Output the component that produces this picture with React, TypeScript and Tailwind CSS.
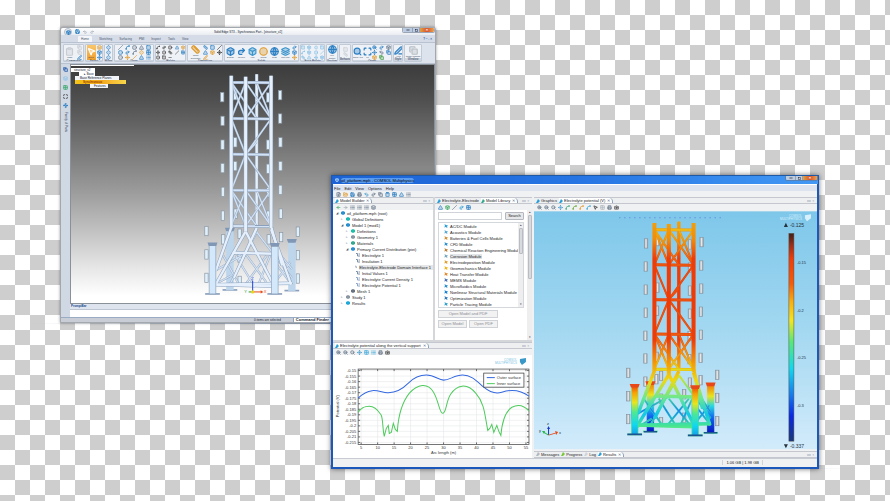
import type { ReactNode } from 'react';
import {
  ArrowLeft,
  ArrowRight,
  Box,
  Camera,
  Circle,
  Clipboard,
  Copy,
  Diamond,
  FilePlus,
  FolderOpen,
  Globe,
  Grid2x2,
  Layers,
  List,
  Maximize,
  Minus,
  MousePointer2,
  Move,
  PenLine,
  Printer,
  Redo2,
  Ruler,
  Save,
  Search,
  Slash,
  Spline,
  Square,
  Triangle,
  Undo2,
  Waypoints,
  ZoomIn,
  ZoomOut,
  type LucideIcon,
} from 'lucide-react';

type Geometry = {
  legs: number[];
  rings: number[];
  top: number;
  posts: { x: number; top: number; bottom: number; back?: boolean }[];
  anodes: [number, number][];
};

const cadTower: Geometry = {
  legs: [124, 167, 200, 243],
  rings: [52, 160, 267, 374, 481],
  top: 32,
  posts: [
    { x: 120, top: 490, bottom: 672, back: true },
    { x: 305, top: 524, bottom: 674, back: true },
    { x: 68, top: 534, bottom: 684 },
    { x: 254, top: 536, bottom: 684 },
  ],
  anodes: [
    [97, 96], [98, 167], [98, 238], [98, 308], [99, 379], [99, 450],
    [270, 90], [270, 160], [271, 231], [271, 302], [271, 373], [272, 444],
    [136, 90], [136, 231], [136, 302], [137, 444], [234, 97], [234, 238], [234, 310], [235, 380], [235, 450],
    [50, 496], [50, 566], [50, 636], [323, 498], [323, 568], [323, 638],
    [100, 521], [273, 514], [149, 504], [149, 575], [149, 645], [236, 521],
  ],
};

const resultTower: Geometry = {
  legs: [162, 205, 235, 279],
  rings: [73, 178, 282, 385, 490],
  top: 53,
  posts: [
    { x: 150, top: 530, bottom: 676, back: true },
    { x: 330, top: 534, bottom: 680, back: true },
    { x: 103, top: 538, bottom: 685 },
    { x: 284, top: 542, bottom: 688 },
  ],
  anodes: [
    [137, 114], [136, 183], [136, 252], [136, 321], [135, 390], [135, 458],
    [303, 110], [302, 180], [302, 249], [301, 318], [301, 387], [300, 456],
    [171, 107], [171, 246], [170, 315], [169, 453], [268, 117], [268, 186], [268, 255], [268, 324], [267, 391], [267, 460],
    [84, 501], [84, 571], [84, 639], [350, 507], [350, 576], [350, 645],
    [135, 527], [300, 523], [168, 520], [182, 510], [182, 578], [182, 648], [251, 565], [251, 635], [268, 530],
  ],
};

function Tower({ g, tube, thin, edge, post, backPost, cap, anode }: {
  g: Geometry;
  tube: string;
  thin: string;
  edge: string;
  post: string;
  backPost: string;
  cap: string;
  anode: string;
}) {
  const [l, m, b, r] = g.legs;
  const [backL, backR, frontL, frontR] = g.posts;
  const foot = frontL.bottom - 28;
  const ring = g.rings[4];
  const mid = ring + 88;

  const braces: number[][] = [];
  [0, 3].forEach((i) => {
    const y1 = g.rings[i];
    const y2 = g.rings[i + 1];
    braces.push([l, y1, m, y2], [m, y1, l, y2], [m, y1, r, y2], [r, y1, m, y2], [l, y1, b, y2], [b, y1, r, y2]);
  });
  braces.push([l, g.rings[1], m, g.rings[2]], [r, g.rings[1], m, g.rings[2]]);
  braces.push([m, g.rings[2], l, g.rings[3]], [m, g.rings[2], r, g.rings[3]], [b, g.rings[1] + 70, m, g.rings[2]]);
  braces.push([backL.x, foot, b, mid - 70], [b, mid - 70, backR.x, foot - 20]);
  braces.push([b - 30, mid, b + 34, foot], [b + 30, mid, b - 34, foot], [m - 30, mid, b - 10, foot], [b + 40, mid, b + 5, foot]);
  braces.push([frontL.x, mid + 50, m, mid - 6], [backL.x - 20, mid, m - 20, foot], [r + 8, mid - 25, backR.x, mid + 40]);
  braces.push([frontR.x, mid + 20, backR.x, foot], [frontR.x, foot - 6, backR.x - 4, mid + 20], [backL.x + 4, mid + 60, frontL.x, mid + 90]);

  const tubes: number[][] = [
    [l, ring + 5, frontL.x + 10, mid + 45],
    [m, ring + 16, frontL.x + 8, foot + 2],
    [m, ring + 16, frontR.x - 4, foot],
    [r, ring + 10, backR.x - 2, foot],
    [b, ring + 6, backL.x + 12, foot - 20],
    [r, ring, frontR.x + 22, mid + 30],
    [l + 4, mid - 8, frontR.x, mid - 5],
    [frontL.x, foot, frontR.x, foot + 5],
    [frontL.x, foot, backR.x, foot - 4],
  ];

  const line = (p: number[], i: number, color: string, w: number) => (
    <line key={i} x1={p[0]} y1={p[1]} x2={p[2]} y2={p[3]} stroke={color} strokeWidth={w} />
  );
  const drawPost = (p: Geometry['posts'][number], i: number) => (
    <g key={i}>
      <path d={`M${p.x - 22} ${p.bottom}h44`} stroke={edge} strokeWidth="5" />
      <rect x={p.x - 10} y={p.top} width="20" height={p.bottom - p.top} fill={p.back ? backPost : post} stroke={p.back ? backPost : edge} strokeWidth="2" />
      <path d={`M${p.x - 15} ${p.top - 4}h30l-4 11h-22z`} fill={cap} />
    </g>
  );

  return (
    <g>
      {g.anodes.map(([x, y]) => (
        <rect key={`${x}-${y}`} x={x - 5} y={y - 14} width="10" height="28" fill={anode} stroke="#8794a0" strokeWidth="2" />
      ))}
      {[backL, backR].map(drawPost)}
      {line([b, g.top - 4, b, ring], 0, edge, 10)}
      {line([b, g.top - 4, b, ring], 1, tube, 7)}
      {braces.map((p, i) => line(p, i, edge, 6))}
      {braces.map((p, i) => line(p, i, thin, 4))}
      {tubes.map((p, i) => line(p, i, edge, 10))}
      {tubes.map((p, i) => line(p, i, tube, 7))}
      {g.rings.map((y, i) => line([l, y, r, y + 1], i, edge, 9))}
      {g.rings.map((y, i) => line([l, y, r, y + 1], i, thin, 6))}
      {[l, m, r].map((x, i) => line([x, x === m ? g.top + 3 : g.top, x, x === m ? ring + 16 : ring + 6], i, edge, 12))}
      {[l, m, r].map((x, i) => line([x, x === m ? g.top + 3 : g.top, x, x === m ? ring + 16 : ring + 6], i, tube, 9))}
      {[frontL, frontR].map(drawPost)}
    </g>
  );
}

function Tool({ icon: Icon, color, label }: { icon: LucideIcon; color: string; label: string }) {
  return (
    <button aria-label={label} className="flex items-center justify-center">
      <Icon className="size-[5px]" color={color} fill={color} fillOpacity={0.25} strokeWidth={3} />
    </button>
  );
}

function WindowControls() {
  return (
    <div className="flex h-[5px] overflow-hidden rounded-b-[2px] border border-t-0 border-slate-500/60">
      <button aria-label="Minimize" className="flex w-[9px] items-center justify-center bg-[#bccbe0]">
        <Minus className="size-[4px]" strokeWidth={4} />
      </button>
      <button aria-label="Maximize" className="flex w-[8px] items-center justify-center border-x border-slate-400 bg-[#bccbe0]">
        <Square className="size-[3px]" strokeWidth={4} />
      </button>
      <button aria-label="Close" className="w-[14px] bg-gradient-to-r from-[#e0a040] via-[#d8502c] to-[#e8a050] text-[4px] font-bold leading-[4px] text-white">
        ×
      </button>
    </div>
  );
}

const blue = '#2b7fc4';
const amber = '#e09a2a';
const slate = '#66788c';

type Group = { name: string; width: string; big: [LucideIcon, string, string][]; small: [LucideIcon, string][]; cols?: string };

const groups: Group[] = [
  { name: 'Command', width: 'w-[21px]', big: [[Clipboard, '#c8cdd4', 'Paste']], small: [[Copy, '#c8cdd4'], [Copy, '#c8cdd4'], [PenLine, blue]] },
  { name: 'Select', width: 'w-[18px]', big: [[MousePointer2, '#ffffff', 'Select']], small: [[Layers, amber], [Box, blue], [Move, blue]] },
  { name: 'Planes', width: 'w-[9px]', big: [], small: [[Diamond, blue], [Diamond, blue], [Diamond, blue]] },
  {
    name: 'Draw', width: 'w-[40px]', big: [], cols: 'grid-cols-5',
    small: [[Slash, slate], [Spline, blue], [Circle, slate], [Triangle, slate], [Square, blue], [Circle, blue], [Redo2, blue], [Spline, slate], [Diamond, amber], [Grid2x2, blue], [Circle, slate], [Move, amber], [Slash, amber], [Triangle, blue], [List, blue]],
  },
  {
    name: 'Relate', width: 'w-[31px]', big: [], cols: 'grid-cols-5',
    small: [[Spline, '#333'], [Redo2, '#333'], [Circle, '#333'], [Triangle, blue], [Box, amber], [Move, '#333'], [Circle, '#333'], [Ruler, '#333'], [Slash, '#333'], [Grid2x2, blue], [Circle, '#333'], [Square, '#333'], [Minus, '#333']],
  },
  { name: 'Dimension', width: 'w-[36px]', big: [[Ruler, amber, 'Smart Dimension']], cols: 'grid-cols-3', small: [[Ruler, blue], [Square, blue], [Slash, '#333'], [Triangle, blue], [Box, amber], [Move, '#333'], [PenLine, amber]] },
  {
    name: 'Solids', width: 'w-[75px]',
    big: [[Box, blue, 'Extrude'], [Redo2, blue, 'Revolve'], [Box, '#3a94cc', 'Hole'], [Circle, amber, 'Round'], [Globe, blue, 'Draft'], [Layers, '#3a94cc', 'Thin Wall']],
    small: [[Redo2, blue], [Box, blue], [Move, amber]],
  },
  { name: 'Face Relate', width: 'w-[25px]', big: [], cols: 'grid-cols-4', small: [[Square, '#7dbce6'], [Box, '#7dbce6'], [Diamond, '#7dbce6'], [Square, '#7dbce6'], [Spline, '#7dbce6'], [Box, '#7dbce6'], [Circle, '#7dbce6'], [Slash, '#7dbce6'], [Ruler, '#7dbce6'], [Triangle, '#7dbce6'], [Move, '#7dbce6'], [Box, '#7dbce6']] },
  { name: 'Section', width: 'w-[12px]', big: [[Globe, blue, 'Live Section']], small: [] },
  { name: 'Behavior', width: 'w-[12px]', big: [], small: [[Square, '#c8cdd4'], [Ruler, '#c8cdd4']] },
  { name: 'Orient', width: 'w-[40px]', big: [[Search, blue, 'Zoom Area'], [Maximize, blue, 'Fit']], cols: 'grid-cols-3', small: [[ZoomIn, blue], [Redo2, blue], [Box, slate], [Move, blue], [Undo2, slate], [Copy, blue], [Box, amber], [Copy, '#3a9a3a']] },
  { name: 'Style', width: 'w-[10px]', big: [[PenLine, blue, 'View']], small: [] },
  { name: 'Window', width: 'w-[18px]', big: [[Copy, '#b8bec6', 'Switch Windows']], small: [] },
];

function Ribbon() {
  return (
    <div className="flex h-[22px] gap-px border-y border-[#b8c2d0] bg-[#dde3ec] px-[2px] py-px">
      {groups.map((group) => (
        <div key={group.name} className={`flex shrink-0 flex-col overflow-hidden rounded-[1px] border border-[#c2cad6] bg-[#eef1f6] ${group.width}`}>
          <div className="flex flex-1 items-center justify-around">
            {group.big.map(([Icon, color, label]) => (
              <button
                key={label}
                className={`flex flex-col items-center justify-center ${group.name === 'Select' ? 'h-full bg-gradient-to-b from-[#f8c66c] to-[#f0a028]' : ''}`}
              >
                <Icon className="size-[9px]" color={color} fill={color} fillOpacity={0.35} strokeWidth={3} />
                <span className="text-[2px] leading-[3px] text-slate-700">{label}</span>
              </button>
            ))}
            {group.small.length > 0 && (
              <div className={`grid gap-x-[2px] ${group.cols ?? 'grid-cols-1'}`}>
                {group.small.map(([icon, color], i) => (
                  <Tool key={i} icon={icon} color={color} label={`${group.name} ${i + 1}`} />
                ))}
              </div>
            )}
          </div>
          <div className="h-[3px] whitespace-nowrap bg-[#cdd5e1] text-center text-[3px] leading-[3px] text-slate-700">{group.name}</div>
        </div>
      ))}
    </div>
  );
}

function SolidEdge() {
  return (
    <section className="absolute left-[60px] top-[27px] flex h-[296px] w-[376px] flex-col overflow-hidden rounded-t-[3px] border border-[#a3a8ae] bg-[#d3dae5] font-['Liberation_Sans',sans-serif] text-[3px] leading-[4px] text-slate-900 shadow-[0_0_3px_rgba(0,0,0,0.4)]">
      <header className="flex h-[7px] items-center gap-[3px] bg-gradient-to-b from-white to-[#e9ecf0] pl-[3px]">
        <button aria-label="Application menu" className="flex size-[8px] items-center justify-center self-start rounded-full border border-[#b4bcc8] bg-[#e4e9f0]">
          <Box className="size-[5px]" color={blue} fill={blue} fillOpacity={0.4} strokeWidth={4} />
        </button>
        <Save className="size-[5px]" color={blue} strokeWidth={4} />
        <Undo2 className="size-[4px]" color={slate} />
        <Redo2 className="size-[4px]" color={slate} />
        <h1 className="flex-1 text-center">Solid Edge ST3 - Synchronous Part - [structure_v2]</h1>
        <div className="self-start"><WindowControls /></div>
      </header>
      <nav className="flex h-[7px] items-end gap-[7px] bg-[#d5dce8] pl-[17px] text-slate-600">
        <button className="rounded-t-[1px] bg-[#f3f5f9] px-[3px] leading-[6px]">Home</button>
        {['Sketching', 'Surfacing', 'PMI', 'Inspect', 'Tools', 'View'].map((tab) => (
          <button key={tab} className="leading-[6px]">{tab}</button>
        ))}
        <span className="ml-auto pr-[3px] font-bold leading-[6px] text-[#245a9c]">? – ▫ ×</span>
      </nav>
      <Ribbon />
      <div className="flex min-h-0 flex-1">
        <aside className="flex w-[9px] flex-col items-center gap-[4px] bg-[#d0d8e4] pt-[3px]">
          <Tool icon={Copy} color="#1c55a8" label="Pathfinder" />
          <Tool icon={Layers} color="#8fc6ea" label="Layers" />
          <Tool icon={Grid2x2} color="#39a86b" label="Sensors" />
          <Tool icon={Maximize} color="#333" label="Playback" />
          <Tool icon={Waypoints} color={blue} label="Family" />
          <span className="text-[3px] text-slate-700 [writing-mode:vertical-rl]">Family of Parts</span>
        </aside>
        <main className="flex min-w-0 flex-1 flex-col">
          <div className="relative min-h-0 flex-1 border border-[#8a9098] bg-[linear-gradient(#3c3c3c_0%,#4e4e4e_14%,#757575_34%,#999999_52%,#c2c2c2_70%,#e8e8e8_86%,#ffffff_97%)]">
            <svg viewBox="0 0 361 237" className="h-full w-full" aria-label="Structure model">
              <g transform="translate(118 0) scale(0.3333)">
                <Tower g={cadTower} tube="#e6f0fc" thin="#d3e2f4" edge="#8aa0bc" post="#d3e8fa" backPost="#bdd6ec" cap="#8097b5" anode="#dff0fc" />
                <g strokeWidth="3" fill="none">
                  <path d="M188 678v-34" stroke="#2442d8" />
                  <path d="M188 678h26" stroke="#e84a1c" />
                  <path d="M188 678h-12" stroke="#2c9a3c" />
                </g>
                <circle cx="188" cy="678" r="5" fill="#ecd318" />
                <path d="M212 673l8 5-8 5z" fill="#e84a1c" />
                <text x="221" y="682" fontSize="12" fill="#e84a1c">X</text>
                <text x="163" y="682" fontSize="12" fill="#2c9a3c">Y</text>
                <text x="184" y="641" fontSize="12" fill="#2442d8">Z</text>
              </g>
            </svg>
            <ul className="absolute left-0 top-0 whitespace-nowrap">
              <li className="mb-[2px] h-px w-[63px] bg-white" />
              <li className="w-[24px] bg-white pl-[3px]">structure_v2</li>
              <li className="ml-[8px] w-[16px] bg-white pl-[5px]">▸ Base</li>
              <li className="ml-[4px] w-[44px] bg-slate-100 pl-[5px]">Base Reference Planes</li>
              <li className="ml-[4px] w-[51px] bg-gradient-to-r from-[#f5c518] via-[#f2a71b] to-[#f7d64a] pl-[8px] font-bold text-[#9c3c00]">Synchronous</li>
              <li className="ml-[19px] w-[18px] bg-slate-100 pl-[4px]">Features</li>
            </ul>
          </div>
          <div className="h-[6px] border-b border-[#bcc5d2] bg-[#dde4ee] pl-px font-bold text-[#20488c]">PromptBar</div>
          <div className="h-[7px] bg-white" />
        </main>
      </div>
      <footer className="flex h-[5px] items-center border-t border-[#9aabc4] bg-[#c9ced6] pl-[193px]">
        <span className="whitespace-nowrap">0 items are selected</span>
        <span className="ml-[12px] whitespace-nowrap border-l border-slate-400 bg-white px-[2px] text-[4px] font-bold">Command Finder</span>
      </footer>
    </section>
  );
}

type Node = { text: string; depth: number; icon: string; open?: boolean; leaf?: boolean; selected?: boolean };

const nodes: Node[] = [
  { text: 'oil_platform.mph (root)', depth: 0, icon: '#2b8fd0', open: true },
  { text: 'Global Definitions', depth: 1, icon: '#1fb8b0' },
  { text: 'Model 1 (mod1)', depth: 1, icon: '#2b8fd0', open: true },
  { text: 'Definitions', depth: 2, icon: '#1fc0a8' },
  { text: 'Geometry 1', depth: 2, icon: '#8a96a2' },
  { text: 'Materials', depth: 2, icon: '#35a890' },
  { text: 'Primary Current Distribution (piei)', depth: 2, icon: '#2b8fd0', open: true },
  { text: 'Electrolyte 1', depth: 3, icon: '#7a8fa8', leaf: true },
  { text: 'Insulation 1', depth: 3, icon: '#7a8fa8', leaf: true },
  { text: 'Electrolyte-Electrode Domain Interface 1', depth: 3, icon: '#7a8fa8', leaf: true, selected: true },
  { text: 'Initial Values 1', depth: 3, icon: '#7a8fa8', leaf: true },
  { text: 'Electrolyte Current Density 1', depth: 3, icon: '#8ca4c8', leaf: true },
  { text: 'Electrolyte Potential 1', depth: 3, icon: '#8ca4c8', leaf: true },
  { text: 'Mesh 1', depth: 2, icon: '#6a7480' },
  { text: 'Study 1', depth: 1, icon: '#8a96a2' },
  { text: 'Results', depth: 1, icon: '#20a8d8' },
];

const indents = ['pl-[3px]', 'pl-[8px]', 'pl-[13px]', 'pl-[18px]'];

const modules: [string, string][] = [
  ['AC/DC Module', '#2a9fd8'],
  ['Acoustics Module', '#58a8d8'],
  ['Batteries & Fuel Cells Module', '#d09038'],
  ['CFD Module', '#2b8fd0'],
  ['Chemical Reaction Engineering Module', '#b88038'],
  ['Corrosion Module', '#78a8c0'],
  ['Electrodeposition Module', '#e0a030'],
  ['Geomechanics Module', '#f0b418'],
  ['Heat Transfer Module', '#e88830'],
  ['MEMS Module', '#4870b0'],
  ['Microfluidics Module', '#2b8fd0'],
  ['Nonlinear Structural Materials Module', '#1880d8'],
  ['Optimization Module', '#3078b8'],
  ['Particle Tracing Module', '#30a0d0'],
];

function Tabs({ children }: { children: ReactNode }) {
  return (
    <div className="flex h-[7px] shrink-0 items-center gap-[2px] overflow-hidden whitespace-nowrap border-y border-[#c4c8ce] bg-[#eeeff1] pl-[2px]">
      {children}
      <span className="ml-auto pr-[3px] text-[4px] text-slate-500">▭ ▫</span>
    </div>
  );
}

function Tab({ children, active, color = '#2b9fd8' }: { children: ReactNode; active?: boolean; color?: string }) {
  return (
    <button className={`flex h-full shrink-0 items-center gap-px ${active ? 'rounded-tr-[4px] border-r border-slate-400 bg-white pr-[2px]' : ''}`}>
      <svg viewBox="0 0 6 6" className="size-[4px]"><path d="M0 6L3 0l3 3-3 3z" fill={color} /></svg>
      {children}
      {active && <span className="pl-px text-slate-500">✕</span>}
    </button>
  );
}

function Toolbar({ items }: { items: [LucideIcon, string][] }) {
  return (
    <div className="flex h-[6px] shrink-0 items-center gap-[2px] bg-[#f0f1f2] pl-[3px]">
      {items.map(([icon, color], i) => (
        <Tool key={i} icon={icon} color={color} label={`Tool ${i + 1}`} />
      ))}
    </div>
  );
}

function Scrollbar({ thumb }: { thumb: string }) {
  return (
    <div className="flex w-[5px] shrink-0 flex-col items-center justify-between bg-[#eeeeef] text-[3px] leading-[5px] text-slate-700">
      <span>▴</span>
      <span className={`w-[4px] rounded-[1px] border border-[#b9bdc3] bg-[#d8dade] ${thumb}`} />
      <span className="flex-1" />
      <span>▾</span>
    </div>
  );
}

function ModelBuilder() {
  return (
    <div className="flex w-[102px] shrink-0 flex-col border-r-2 border-[#d4d6da] bg-white">
      <Tabs><Tab active>Model Builder</Tab></Tabs>
      <Toolbar items={[[ArrowLeft, '#3aa86a'], [ArrowRight, '#a0aab4'], [List, slate], [List, slate], [List, slate], [Layers, slate]]} />
      <ul className="flex flex-col">
        {nodes.map((node) => (
          <li key={node.text} className={`flex h-[6px] items-center gap-[2px] whitespace-nowrap ${indents[node.depth]}`}>
            <span className="w-[3px] text-[3px] text-slate-600">{node.leaf ? '' : node.open ? '◢' : '▹'}</span>
            <svg viewBox="0 0 8 8" className="size-[4px]">
              {node.leaf ? (
                <path d="M0 1h3v5h5M5 2h3" fill="none" stroke={node.icon} strokeWidth="2" />
              ) : (
                <path d="M4 0l4 2v4L4 8 0 6V2z" fill={node.icon} />
              )}
            </svg>
            <span className={node.selected ? 'bg-[#e4e6e8] pr-[2px]' : ''}>{node.text}</span>
          </li>
        ))}
      </ul>
    </div>
  );
}

function ModelLibrary() {
  return (
    <div className="flex min-w-0 flex-1 flex-col bg-[#f7f7f8]">
      <Tabs>
        <Tab>Electrolyte-Electrode</Tab>
        <Tab active color="#38a890">Model Library</Tab>
      </Tabs>
      <Toolbar items={[[Triangle, blue], [Box, '#38a860'], [Slash, slate], [Redo2, '#2a9fd8'], [Grid2x2, blue]]} />
      <div className="flex min-h-0 flex-1">
        <div className="flex min-w-0 flex-1 flex-col bg-white px-[3px] pt-[2px]">
          <div className="flex gap-[3px]">
            <input aria-label="Search models" className="h-[8px] min-w-0 flex-1 border border-[#d0d3d8] bg-white" />
            <button className="h-[8px] w-[19px] rounded-[1px] border border-[#b4b8be] bg-[#e6e7e9] leading-[6px]">Search</button>
          </div>
          <div className="mt-[2px] flex border border-[#d4d7db]">
            <ul className="min-w-0 flex-1">
              {modules.map(([name, color]) => (
                <li key={name} className="flex h-[6px] items-center gap-[2px] whitespace-nowrap pl-[5px]">
                  <svg viewBox="0 0 8 8" className="size-[4px] shrink-0"><path d="M1 0l3 2 4 1-2 2 1 3-4-2-3 1 2-3z" fill={color} /></svg>
                  <span className={name === 'Corrosion Module' ? 'bg-[#e2e5e8]' : ''}>{name}</span>
                </li>
              ))}
            </ul>
            <Scrollbar thumb="h-[26px]" />
          </div>
          <div className="grid w-[60px] grid-cols-2 gap-[2px] pt-[2px] text-[#8a8d92]">
            <button className="col-span-2 h-[8px] border border-[#cfd2d6] bg-[#f2f2f3] leading-[6px]">Open Model and PDF</button>
            <button className="h-[8px] border border-[#cfd2d6] bg-[#f2f2f3] leading-[6px]">Open Model</button>
            <button className="h-[8px] border border-[#cfd2d6] bg-[#f2f2f3] leading-[6px]">Open PDF</button>
          </div>
        </div>
        <Scrollbar thumb="h-[64px]" />
      </div>
    </div>
  );
}

const yTicks = ['-0.15', '-0.155', '-0.16', '-0.165', '-0.17', '-0.175', '-0.18', '-0.185', '-0.19', '-0.195', '-0.2', '-0.205', '-0.21', '-0.215'];
const xTicks = [5, 10, 15, 20, 25, 30, 35, 40, 45, 50, 55];

const zoomTools: [LucideIcon, string][] = [[ZoomIn, slate], [ZoomOut, slate], [Search, slate], [Move, '#4a9fd0'], [Grid2x2, '#4ab0e0'], [List, '#38a8d8'], [Printer, slate], [Camera, '#444']];

function PotentialPlot() {
  return (
    <div className="flex flex-col border-t-2 border-[#d4d6da] bg-white">
      <Tabs><Tab active>Electrolyte potential along the vertical support</Tab></Tabs>
      <Toolbar items={zoomTools} />
      <svg viewBox="0 0 198 102" className="w-full bg-white" fontSize="4" fill="#333">
        <g stroke="#e0e2e4" strokeWidth="0.5">
          {yTicks.map((t, i) => <path key={t} d={`M25 ${15.5 + i * 5.5}h170`} />)}
          {xTicks.map((t, i) => <path key={t} d={`M${28 + i * 16.4} 14v75`} />)}
        </g>
        <g stroke="#333" strokeWidth="0.7">
          {yTicks.map((t, i) => <path key={t} d={`M25 ${15.5 + i * 5.5}h2m166 0h2`} />)}
          {xTicks.map((t, i) => <path key={t} d={`M${28 + i * 16.4} 14v2m0 71v2`} />)}
        </g>
        <rect x="25" y="14" width="170" height="75" fill="none" stroke="#555" strokeWidth="0.8" />
        <g textAnchor="end">
          {yTicks.map((t, i) => <text key={t} x="23" y={17 + i * 5.5}>{t}</text>)}
        </g>
        <g textAnchor="middle">
          {xTicks.map((t, i) => <text key={t} x={28 + i * 16.4} y="94">{t}</text>)}
          <text x="110" y="99">Arc length (m)</text>
          <text transform="translate(6 51) rotate(-90)">Potential (V)</text>
        </g>
        <path
          d="M25 43C29 39 33 36 39 35.500C44 35 49 37 54 37.500C63 38 69 34 75 28C81 22 87 20 93 20C101 20 105 25 110 25C116 25 121 20 129 20C138 20 143 26 150 32C156 37 162 39 168 37C177 34 187 35 195 41"
          fill="none" stroke="#3468e0" strokeWidth="1"
        />
        <path
          d="M25 57C29 51 33 51 36 51C43 51 46 57 48 60C50 65 49 72 51 81L53 73L55 70L56 78L58 77L60 68L62 74L64 76C65 60 68 48 76 38C84 29 94 27 100 37C105 45 106 58 109 58C113 58 112 47 117 39C123 30 133 27 142 38C151 48 151 60 154 75L156 73L158 69L160 77L163 70L165 76L167 80C168 69 170 57 178 52C184 49 190 50 195 56"
          fill="none" stroke="#4ecb5c" strokeWidth="1"
        />
        <rect x="150" y="18" width="40" height="14" fill="#fff" stroke="#333" strokeWidth="0.7" />
        <path d="M153 22.500h8" stroke="#3468e0" />
        <path d="M153 28.500h8" stroke="#4ecb5c" />
        <text x="163" y="24">Outer surface</text>
        <text x="163" y="30">Inner surface</text>
        <g fill="#7cc3e4" fontSize="3">
          <text x="183" y="6" textAnchor="end">COMSOL</text>
          <text x="183" y="9" textAnchor="end">MULTIPHYSICS</text>
        </g>
        <path d="M186 4l6-1v4l-4 3-2-3z" fill="#3a98c8" />
      </svg>
    </div>
  );
}

function Graphics() {
  return (
    <svg viewBox="0 0 282 237" className="w-full flex-1" fontSize="4" fill="#26323c" aria-label="Electrolyte potential">
      <defs>
        <linearGradient id="sky" x1="0" y1="0" x2="0" y2="1">
          <stop offset="0" stopColor="#7ec7ea" />
          <stop offset="0.45" stopColor="#9fd6f0" />
          <stop offset="1" stopColor="#d2ebfb" />
        </linearGradient>
        <linearGradient id="scale" x1="0" y1="0" x2="0" y2="1">
          <stop offset="0" stopColor="#402018" />
          <stop offset="0.06" stopColor="#a03018" />
          <stop offset="0.12" stopColor="#f03c08" />
          <stop offset="0.24" stopColor="#f65a08" />
          <stop offset="0.33" stopColor="#f8b010" />
          <stop offset="0.42" stopColor="#f2e620" />
          <stop offset="0.52" stopColor="#58e878" />
          <stop offset="0.65" stopColor="#10d8f0" />
          <stop offset="0.78" stopColor="#1478f0" />
          <stop offset="0.88" stopColor="#0828e8" />
          <stop offset="1" stopColor="#183878" />
        </linearGradient>
        <linearGradient id="potential" gradientUnits="userSpaceOnUse" x1="0" y1="50" x2="0" y2="690">
          <stop offset="0" stopColor="#f2a00c" />
          <stop offset="0.08" stopColor="#f28c08" />
          <stop offset="0.17" stopColor="#ee3c08" />
          <stop offset="0.55" stopColor="#ee3c08" />
          <stop offset="0.66" stopColor="#f59a08" />
          <stop offset="0.74" stopColor="#eed910" />
          <stop offset="0.82" stopColor="#6ce890" />
          <stop offset="0.9" stopColor="#10c8e8" />
          <stop offset="0.96" stopColor="#50e888" />
        </linearGradient>
        <linearGradient id="brace" gradientUnits="userSpaceOnUse" x1="0" y1="50" x2="0" y2="690">
          <stop offset="0" stopColor="#f2d010" />
          <stop offset="0.08" stopColor="#ec9c10" />
          <stop offset="0.22" stopColor="#e84c10" />
          <stop offset="0.52" stopColor="#e85a10" />
          <stop offset="0.62" stopColor="#f09c10" />
          <stop offset="0.7" stopColor="#d8e820" />
          <stop offset="0.8" stopColor="#58e8a0" />
          <stop offset="0.88" stopColor="#2080e8" />
          <stop offset="0.97" stopColor="#40e0a0" />
        </linearGradient>
        <linearGradient id="post" x1="0" y1="0" x2="0" y2="1">
          <stop offset="0" stopColor="#f04008" />
          <stop offset="0.15" stopColor="#f5a008" />
          <stop offset="0.35" stopColor="#e8e420" />
          <stop offset="0.55" stopColor="#50e890" />
          <stop offset="0.8" stopColor="#10d8f0" />
          <stop offset="1" stopColor="#18a0e8" />
        </linearGradient>
        <linearGradient id="backPost" x1="0" y1="0" x2="0" y2="1">
          <stop offset="0" stopColor="#f07008" />
          <stop offset="0.25" stopColor="#e8e420" />
          <stop offset="0.45" stopColor="#28d8e0" />
          <stop offset="0.7" stopColor="#1060f0" />
          <stop offset="1" stopColor="#0818c0" />
        </linearGradient>
        <linearGradient id="anode" x1="0" y1="0" x2="1" y2="0">
          <stop offset="0" stopColor="#a8acb0" />
          <stop offset="0.5" stopColor="#e8eaec" />
          <stop offset="1" stopColor="#9a9ea2" />
        </linearGradient>
      </defs>
      <rect width="282" height="237" fill="url(#sky)" />
      <path d="M85 6.500h101" stroke="#5a78d8" strokeWidth="1" strokeDasharray="1 4" />
      <g transform="translate(66 -6) scale(0.3333)">
        <Tower g={resultTower} tube="url(#potential)" thin="url(#brace)" edge="url(#potential)" post="url(#post)" backPost="url(#backPost)" cap="#e84818" anode="url(#anode)" />
        <path d="M81 685h44M262 688h44M130 677h40M310 680h40" stroke="#1c5490" strokeWidth="5" />
      </g>
      <rect x="254" y="22" width="5" height="207" fill="url(#scale)" stroke="#5a5048" strokeWidth="0.5" />
      <path d="M249 15.500l2-4 2 4zM249 232l2 4 2-4z" />
      <text x="255" y="15.500" fontSize="5">-0.125</text>
      <text x="262" y="52">-0.15</text>
      <text x="262" y="100">-0.2</text>
      <text x="262" y="147">-0.25</text>
      <text x="262" y="195">-0.3</text>
      <text x="255" y="236" fontSize="5">-0.337</text>
      <g fill="#d8f0fc" fontSize="3">
        <text x="267" y="6" textAnchor="end">COMSOL</text>
        <text x="267" y="9" textAnchor="end">MULTIPHYSICS</text>
        <path d="M270 4l6-1v4l-4 3-2-3z" />
      </g>
      <g fill="none" strokeWidth="1">
        <path d="M14.500 223v-7" stroke="#1838c8" />
        <path d="M14.500 223l7-2" stroke="#e84818" />
        <path d="M14.500 223l-5-3" stroke="#28b848" />
      </g>
      <path d="M13 217l1.500-3 1.500 3z" fill="#1838c8" />
      <path d="M21 219l3 1-2 3z" fill="#e84818" />
      <path d="M10 222l-2-3h3z" fill="#28b848" />
      <text x="13" y="213">z</text>
      <text x="25" y="222">x</text>
      <text x="5" y="220">y</text>
    </svg>
  );
}

function Comsol() {
  return (
    <section className="absolute left-[331px] top-[175px] flex w-[488px] flex-col border-2 border-t-0 border-[#1c58bc] bg-[#f0f1f2] font-['Liberation_Sans',sans-serif] text-[4px] leading-[5px] text-[#222] shadow-[0_0_5px_rgba(0,0,0,0.55)]">
      <header className="-mx-px flex h-[9px] items-center gap-[2px] border-t border-[#2058a8] bg-gradient-to-r from-[#1c62d4] via-[#2674e4] to-[#4298f4] pl-[3px]">
        <Box className="size-[4px]" color="#bfe4ff" strokeWidth={4} />
        <h1 className="rounded bg-[#5a9cf0] text-black">oil_platform.mph - COMSOL Multiphysics</h1>
        <div className="ml-auto self-start"><WindowControls /></div>
      </header>
      <nav className="flex h-[7px] items-center gap-[4px] border-t border-white bg-[#dde3ef] pl-px">
        {['File', 'Edit', 'View', 'Options', 'Help'].map((item) => (
          <button key={item}>{item}</button>
        ))}
      </nav>
      <div className="flex h-[6px] items-center">
        <Toolbar items={[[FilePlus, slate], [FolderOpen, amber], [Save, blue], [Printer, slate], [Undo2, '#4a9fd0'], [Redo2, slate], [Copy, slate], [Clipboard, blue], [Grid2x2, blue], [Triangle, blue], [List, slate]]} />
      </div>
      <div className="flex">
        <div className="flex w-[199px] shrink-0 flex-col">
          <div className="flex h-[143px]">
            <ModelBuilder />
            <ModelLibrary />
          </div>
          <PotentialPlot />
        </div>
        <div className="ml-[2px] flex min-w-0 flex-1 flex-col">
          <Tabs>
            <Tab>Graphics</Tab>
            <Tab active>Electrolyte potential (V)</Tab>
          </Tabs>
          <Toolbar items={[[ZoomIn, slate], [ZoomOut, slate], [Search, slate], [Move, '#4a9fd0'], [Spline, '#38a880'], [Spline, '#68a838'], [Spline, amber], [Spline, '#38a8d8'], [MousePointer2, '#333'], [Grid2x2, '#b0b8c0'], [Printer, slate], [Camera, '#444']]} />
          <Graphics />
          <Tabs>
            <Tab color="#b0b8c0">Messages</Tab>
            <Tab color="#78c838">Progress</Tab>
            <Tab color="#d0d4d8">Log</Tab>
            <Tab active>Results</Tab>
          </Tabs>
        </div>
      </div>
      <footer className="flex h-[9px] items-center justify-end border-t border-[#c8ccd2] pr-[54px]">
        <span className="border-x border-[#d0d3d8] px-[3px]">1.06 GB | 1.98 GB</span>
      </footer>
    </section>
  );
}

export default function App() {
  return (
    <div className="relative min-h-screen overflow-hidden bg-[repeating-conic-gradient(#cecece_0_25%,#ffffff_0_50%)] bg-[length:30px_30px]">
      <div className="absolute left-[30px] top-[323px] h-px w-[300px] bg-gradient-to-r from-transparent to-slate-400" />
      <div className="absolute left-[500px] top-[468px] h-px w-[355px] bg-gradient-to-l from-transparent to-slate-400" />
      <SolidEdge />
      <Comsol />
    </div>
  );
}
